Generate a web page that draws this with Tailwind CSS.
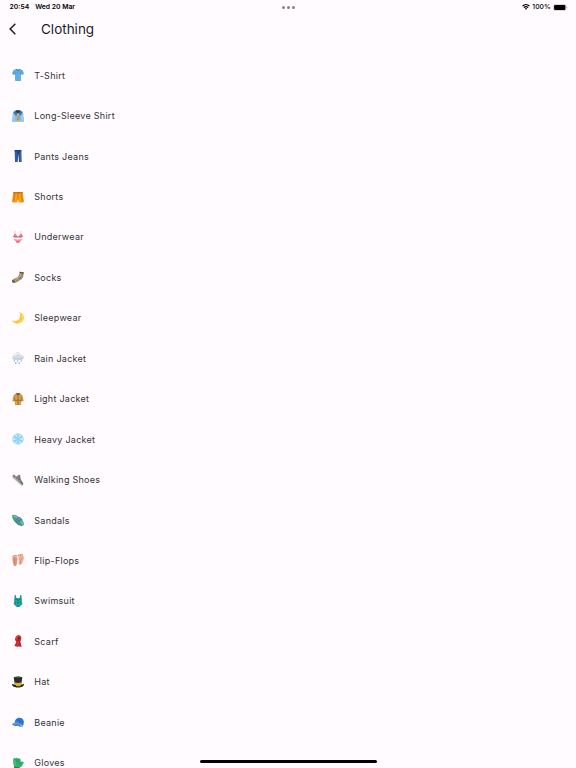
<!DOCTYPE html>
<html lang="en">
<head>
  <meta charset="UTF-8">
  <meta name="viewport" content="width=device-width, initial-scale=1">
  <title>Clothing</title>
  <script src="https://cdn.jsdelivr.net/npm/@tailwindcss/browser@4"></script>
</head>
<body class="relative h-screen overflow-hidden bg-[#fffbff] font-['Inter',sans-serif] text-[#1d1b1e]">
  <!-- Status bar -->
  <div class="grid h-[14px] grid-cols-3 items-center pl-[9.5px] pr-[8.5px] text-[6.8px] font-semibold leading-none text-black">
    <div class="flex gap-[6px]"><span>20:54</span><span>Wed 20 Mar</span></div>
    <div class="flex justify-center gap-[2px]">
      <span class="size-[3px] rounded-full bg-[#858386]"></span>
      <span class="size-[3px] rounded-full bg-[#858386]"></span>
      <span class="size-[3px] rounded-full bg-[#858386]"></span>
    </div>
    <div class="flex items-center justify-end gap-[2.2px]">
      <svg class="h-[6px] w-[8px]" viewBox="0 0 24 18" fill="none" stroke="#000" stroke-width="3.8">
        <path d="M1.5 6.5a15 15 0 0 1 21 0M5.5 10.9a9.3 9.3 0 0 1 13 0"/>
        <path d="M12 17.5l-3.6-3.7a5.2 5.2 0 0 1 7.2 0z" fill="#000" stroke="none"/>
      </svg>
      <span class="font-medium">100%</span>
      <svg class="h-[7px] w-[14.6px]" viewBox="0 0 43 21">
        <rect x=".8" y="1" width="38" height="19" rx="5.5" fill="none" stroke="#9b999c" stroke-width="1.3"/>
        <rect x="2.8" y="3" width="34" height="15" rx="3.5" fill="#000"/>
        <path d="M40.5 8v5q2-.8 2-2.5t-2-2.5z" fill="#9b999c"/>
      </svg>
    </div>
  </div>

  <!-- App bar -->
  <header class="flex h-[31px] items-center pl-[9px]">
    <svg class="mb-[1px] h-[12px] w-[8px]" viewBox="0 0 24 36" fill="none" stroke="#1d1b1e" stroke-width="4.4"><path d="M19 2.5L3.5 18 19 33.5"/></svg>
    <h1 class="ml-[24px] text-[13.5px] leading-none">Clothing</h1>
  </header>

  <ul id="list" class="mt-[10px] text-[9px] tracking-[0.26px] text-[#343236]"></ul>

  <div class="absolute bottom-[5px] left-[199.5px] h-[3px] w-[177px] rounded-full bg-black"></div>

  <script>
    // name, drawing on a 36x36 grid
    const items = [
      ["T-Shirt", `<path d="M11 1q7 4 14 0l7 3 4 10-6 4-3-3v20q-9 2-18 0V15l-3 3-6-4L4 4z" fill="#5caade"/><path d="M11 1q7 8 14 0l-3-1q-4 3-8 0z" fill="#2c77aa"/><path d="M12 15v18M23 14v19" stroke="#78c0ec" stroke-width="2"/><path d="M9 10v7M27 10v7" stroke="#3d8cc2" stroke-width="1.5"/>`],
      ["Long-Sleeve Shirt", `<path d="M9 2L3 5 0 35h36L33 5l-6-3z" fill="#83bae9"/><path d="M9 2L5 8l7 10 6-8 6 8 7-10-4-6-9 6z" fill="#3676b1"/><path d="M10 3l8 8 8-8-2-2H12z" fill="#1e3c5e"/><path d="M16 10h5l1 4-1 2 3 16-4 3-5-3 2-16-2-2z" fill="#d6b262"/><path d="M16 22l6-3M15 29l8-4" stroke="#886b35" stroke-width="2"/><path d="M6 15v19M30 15v19" stroke="#aed7f6" stroke-width="3"/>`],
      ["Pants Jeans", `<path d="M8 0h20l1 36h-8L19 11l-2 25H9z" fill="#2d509d"/><path d="M8 0h20v4H8z" fill="#243c79"/><path d="M12 8v26M26 8v26" stroke="#4b75bd" stroke-width="2"/><path d="M19 4v8" stroke="#162d61" stroke-width="2"/>`],
      ["Shorts", `<path d="M4 3h28l4 30q-8 3-16 1l-2-10-2 10q-8 2-16-1z" fill="#ef9610"/><path d="M4 3h28v4H4z" fill="#ca7409"/><path d="M18 6v17M8 9L5 32M28 9l3 23" stroke="#c76e08" stroke-width="1.7"/><path d="M13 9l-2 23M23 9l2 23" stroke="#ffb32d" stroke-width="2"/>`],
      ["Underwear", `<path d="M10 0L8 13M26 0l2 13" stroke="#ec9cac" stroke-width="1.8"/><path d="M9 8q7 4 8 10-7 3-13-1 1-6 5-9zM27 8q-7 4-8 10 7 3 13-1-1-6-5-9z" fill="#ed5f7c"/><path d="M4 17q14 3 28 0" fill="none" stroke="#c94463" stroke-width="2"/><path d="M4 24q14 4 28 0-7 4-10 11h-8Q11 28 4 24z" fill="#ed5f7c"/><path d="M8 14h6M22 14h6M12 29h12" stroke="#ffb7c4" stroke-width="2"/>`],
      ["Socks", `<path d="M23 2l12 2q0 10-2 15-3 6-12 10-8 7-15 6-6-2-5-8 3-4 13-7 8-4 9-18z" fill="#9d8b70"/><path d="M23 2l12 2v4l-12-2z" fill="#655642"/><path d="M2 27l6 7q-9 2-6-7zM20 18l9 6" fill="#5c4b38" stroke="#5c4b38" stroke-width="2"/><path d="M26 9q-1 9-7 13-6 2-9 6" fill="none" stroke="#c4b294" stroke-width="3"/>`],
      ["Sleepwear", `<path d="M22 0q14 5 14 18-2 15-17 17Q6 36 0 25q14 5 21-3 6-9 1-22z" fill="#f9cc43"/><path d="M25 4q10 7 7 17-4 10-14 11" fill="none" stroke="#ffe17b" stroke-width="3"/><circle cx="27" cy="20" r="2" fill="#e6ac2b"/><circle cx="17" cy="29" r="1.7" fill="#e6ac2b"/>`],
      ["Rain Jacket", `<path d="M7 24q-7-2-7-8 1-6 7-7 3-9 11-9 8 1 11 9 6 1 7 7-1 6-7 8z" fill="#d5dce1"/><path d="M9 11q2-7 9-7 7 0 9 7" fill="none" stroke="#f0f2f5" stroke-width="4"/><path d="M3 19q8 4 15 1 8 4 15-1" fill="none" stroke="#aebbc4" stroke-width="2"/><path d="M8 25l-1 4M17 25l-1 4M28 25l-1 4M12 31l-1 5M22 31l-1 5" stroke="#61b6e8" stroke-width="3.4"/>`],
      ["Light Jacket", `<path d="M13 0h10l8 7 4 16-7 4-1-4v13H9V23l-1 4-7-4L5 7z" fill="#c99542"/><path d="M12 0l6 10 6-10" fill="#855a22"/><path d="M18 10v26M9 22h18M9 12v10M27 12v10" stroke="#8c5e24" stroke-width="1.8"/><path d="M12 8v12M24 8v12M13 25v9M23 25v9" stroke="#e5bc6d" stroke-width="2"/>`],
      ["Heavy Jacket", `<circle cx="18" cy="18" r="15" fill="#d9f1fc"/><g fill="none" stroke="#73c9f0" stroke-width="2.3"><path d="M18 1v34M3 9l30 18M3 27L33 9M12 3l6 6 6-6M12 33l6-6 6 6M2 15l8-2-2-8M34 21l-8 2 2 8M2 21l8 2-2 8M34 15l-8-2 2-8"/><circle cx="18" cy="18" r="7"/></g><circle cx="18" cy="18" r="16" fill="none" stroke="#9bdaf6" stroke-width="2.5" stroke-dasharray="5 3"/>`],
      ["Walking Shoes", `<path d="M1 5l6-4 5 7 8-6 5 1 1 12 8 13-1 7-6-1L2 11z" fill="#98958f"/><path d="M2 7l26 26 4 2" fill="none" stroke="#d5d2cb" stroke-width="3"/><path d="M11 9l11 11M15 7l10 11M20 4l5 15" stroke="#64615d" stroke-width="2"/><path d="M4 5l5 4M25 21l7 9" stroke="#5a5754" stroke-width="3"/>`],
      ["Sandals", `<path d="M0 4q6-5 16 2 17 10 20 23 0 7-7 7-9 0-17-9Q0 16 0 4z" fill="#42a88d"/><path d="M4 6q8 1 16 9 11 9 12 17" fill="none" stroke="#82d0b5" stroke-width="3"/><path d="M10 20q3-10 14-11l8 8q-9 2-13 11z" fill="#567f9e"/><path d="M15 20q3-6 11-7" fill="none" stroke="#7f9fbd" stroke-width="3"/><path d="M5 18q11 15 24 16" fill="none" stroke="#28765f" stroke-width="2"/>`],
      ["Flip-Flops", `<path d="M2 10q6-5 13 0 3 6 0 11 1 11-4 15-7 1-7-6Q0 17 2 10z" fill="#dc9577"/><path d="M20 7q7-8 14-2 4 8-1 16-1 11-9 12-7-3-3-12-3-7-1-14z" fill="#f0b294"/><g fill="#d98972"><circle cx="3" cy="7" r="2.2"/><circle cx="7" cy="5" r="2.2"/><circle cx="11" cy="5" r="2.2"/><circle cx="15" cy="6" r="2.4"/><circle cx="20" cy="4" r="2.5"/><circle cx="25" cy="2" r="2.2"/><circle cx="30" cy="2" r="2.2"/></g><path d="M6 13q5 8 1 17M29 10q-4 8-4 19" fill="none" stroke="#c87960" stroke-width="1.8"/>`],
      ["Swimsuit", `<path d="M8 0l3 0 2 8q5 4 10 0l2-8h3l1 11q2 3 0 8l2 8-9 9h-8l-9-9 2-8q-2-5 0-8z" fill="#189994"/><path d="M11 13q7 4 14 0M9 21q9 4 18 0" fill="none" stroke="#08706f" stroke-width="1.8"/><path d="M12 14q3 9 1 17M24 14q-3 9-1 17" fill="none" stroke="#40bfb5" stroke-width="1.6"/>`],
      ["Scarf", `<path d="M14 2q6-4 11 0 5 5 2 12l-2 5 4 17-9-2-1 2-12-3 6-13-4-6q0-7 5-12z" fill="#c82e31"/><path d="M17 8q4-4 7 1-1 4-6 5z" fill="#7f171b"/><path d="M11 16q8 3 15 0M16 21l-4 12M21 20l4 14" fill="none" stroke="#8e1d20" stroke-width="1.8"/><path d="M13 12q1-7 7-8M18 20l-3 12" fill="none" stroke="#ea5752" stroke-width="2"/>`],
      ["Hat", `<path d="M5 4q13-5 26 0l-3 20q-10 5-20 0z" fill="#292b2d"/><path d="M7 19q11 4 22 0v8q-11 5-22 0z" fill="#dfaf2b"/><path d="M0 23l7 3q11 4 22 0l7-3q0 9-9 10-9 3-18 0-9-1-9-10z" fill="#1d1e20"/><path d="M12 26q6 2 14 0v4q-7 2-14 0z" fill="#d8aa30"/><ellipse cx="18" cy="4" rx="12" ry="2" fill="#45474a"/>`],
      ["Beanie", `<path d="M8 20Q9 6 21 5q13-1 15 13l-3 12q-10-7-20-3z" fill="#3479db"/><path d="M0 25q9-10 24-3 5 4 1 9-10-4-15-1-10-1-10-5z" fill="#5296ef"/><path d="M23 6q-2 8 2 16M13 11q10 0 20 9" fill="none" stroke="#215dae" stroke-width="1.5"/><path d="M9 29q7-4 15 2l8-1" fill="none" stroke="#1f4e99" stroke-width="2"/>`],
      ["Gloves", `<path d="M4 5q3-4 7 0 3-5 7 0 5-3 8 3v7q5-4 9 1 0 7-7 13l-6 3v4H7l-1-9Q2 17 4 5z" fill="#31b36b"/><path d="M11 5l2 10M18 6l1 10M26 15l-4 7" stroke="#168248" stroke-width="1.7"/><path d="M7 29l15 2v5H7z" fill="#16894b"/><path d="M8 9l3 15" stroke="#5bd48d" stroke-width="2"/>`]
    ];

    document.getElementById("list").innerHTML = items.map(([name, art]) => `
      <li class="flex h-[40.44px] items-center gap-[10.3px] pl-[12px]">
        <svg class="size-[12px] shrink-0" viewBox="0 0 36 36">${art}</svg>
        <span class="leading-none">${name}</span>
      </li>`).join("");
  </script>
</body>
</html>
